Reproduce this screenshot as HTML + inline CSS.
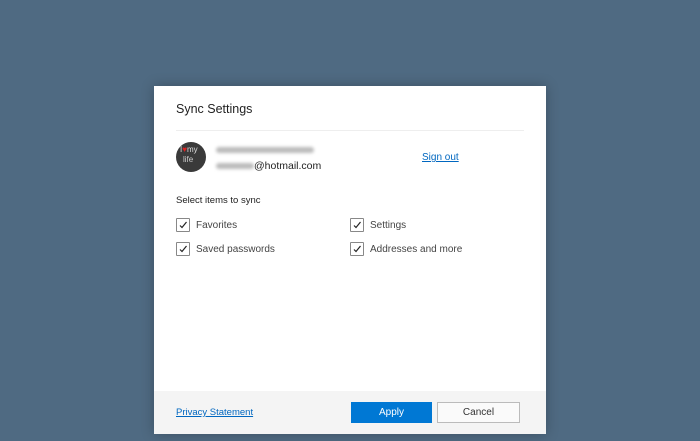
<!DOCTYPE html>
<html><head><style>
body{margin:0;width:700px;height:441px;background:#4f6a82;font-family:"Liberation Sans",sans-serif;position:relative;overflow:hidden}
.d{position:absolute;left:154px;top:86px;width:392px;height:348px;background:#fff;box-shadow:0 0 12px rgba(0,0,0,.25)}
.t{position:absolute;font-size:10px;color:#222;white-space:nowrap;line-height:12px}
.cb{position:absolute;width:12px;height:12px;border:1px solid #888;border-radius:1px;background:#fff}
.cb svg{position:absolute;left:1px;top:1px}
.f{position:absolute;left:0;top:305px;width:392px;height:43px;background:#f4f4f4}
.blur{position:absolute;height:6px;background:#bbb;border-radius:3px;filter:blur(1.5px)}
</style></head><body>
<div class="d">
<div class="t" style="left:22px;top:16px;font-size:12.5px;line-height:15px">Sync Settings</div>
<div style="position:absolute;left:22px;top:44px;width:348px;height:1px;background:#eee"></div>
<div style="position:absolute;left:22px;top:56px;width:30px;height:30px;border-radius:50%;background:#3a3a3a;overflow:hidden">
<div style="position:absolute;left:4px;top:3px;font-size:8px;color:#ddd">I<span style="color:#d22">♥</span>my</div>
<div style="position:absolute;left:7px;top:13px;font-size:8px;color:#ccc">life</div></div>
<div class="blur" style="left:62px;top:61px;width:98px"></div>
<div class="blur" style="left:62px;top:77px;width:38px"></div>
<div class="t" style="left:100px;top:74px;font-size:10.5px">@hotmail.com</div>
<div class="t" style="left:268px;top:66px;color:#0067c0;text-decoration:underline">Sign out</div>
<div class="t" style="left:22px;top:109px;font-size:9.5px">Select items to sync</div>
<div class="cb" style="left:22px;top:132px"><svg width="10" height="10"><path d="M2 5.5L4 7.5 8.5 2" stroke="#222" stroke-width="1.2" fill="none"/></svg></div>
<div class="t" style="left:42px;top:134px;color:#444">Favorites</div>
<div class="cb" style="left:196px;top:132px"><svg width="10" height="10"><path d="M2 5.5L4 7.5 8.5 2" stroke="#222" stroke-width="1.2" fill="none"/></svg></div>
<div class="t" style="left:216px;top:134px;color:#444">Settings</div>
<div class="cb" style="left:22px;top:156px"><svg width="10" height="10"><path d="M2 5.5L4 7.5 8.5 2" stroke="#222" stroke-width="1.2" fill="none"/></svg></div>
<div class="t" style="left:42px;top:158px;color:#444">Saved passwords</div>
<div class="cb" style="left:196px;top:156px"><svg width="10" height="10"><path d="M2 5.5L4 7.5 8.5 2" stroke="#222" stroke-width="1.2" fill="none"/></svg></div>
<div class="t" style="left:216px;top:158px;color:#444">Addresses and more</div>
<div class="f">
<div class="t" style="left:22px;top:16px;color:#0067c0;text-decoration:underline;font-size:9.5px">Privacy Statement</div>
<div style="position:absolute;left:197px;top:11px;width:81px;height:21px;background:#0078d4;color:#fff;font-size:10px;text-align:center;line-height:22px">Apply</div>
<div style="position:absolute;left:283px;top:11px;width:81px;height:19px;border:1px solid #bbb;background:#fafafa;color:#333;font-size:10px;text-align:center;line-height:20px">Cancel</div>
</div>
</div>
</body></html>
